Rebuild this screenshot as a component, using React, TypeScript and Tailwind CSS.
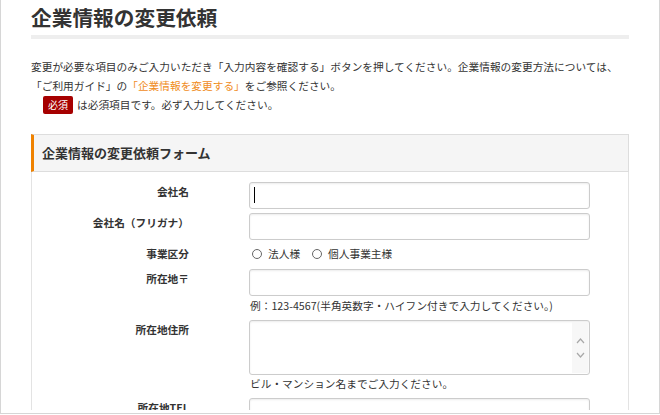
import React from "react";

const font = { fontFamily: '"Noto Sans CJK JP", "Noto Sans", sans-serif' };

function Label({ children }: { children: React.ReactNode }) {
  return (
    <div className="w-[157px] shrink-0 text-right text-[10.7px] font-bold leading-[20px] text-[#333]">
      {children}
    </div>
  );
}

function Field({ caret }: { caret?: boolean }) {
  return (
    <div className="relative h-[27px] w-[341px] rounded-[3px] border border-[#ccc] bg-white shadow-[inset_0_1px_2px_rgba(0,0,0,0.08)]">
      {caret && <span className="absolute left-[4px] top-[4px] h-[16px] w-px bg-black" />}
    </div>
  );
}

function Radio({ label }: { label: string }) {
  return (
    <span className="inline-flex items-center gap-[6px]">
      <span className="h-[10px] w-[10px] rounded-full border border-[#666] bg-white" />
      <span>{label}</span>
    </span>
  );
}

export default function App() {
  return (
    <div className="h-[415px] w-[660px] bg-white" style={font}>
      <div className="h-[414px] w-[660px] border-x border-b border-[#d6d6d6]">
        <div className="h-[410px] overflow-hidden px-[30px] text-[#333]">
          <h1 className="border-b-[4px] border-[#eeeeee] text-[20.7px] font-bold leading-[35px] text-[#333]">
            企業情報の変更依頼
          </h1>

          <div className="mt-[18px] text-[10.7px] leading-[19px]">
            <p>変更が必要な項目のみご入力いただき「入力内容を確認する」ボタンを押してください。企業情報の変更方法については、</p>
            <p>
              「ご利用ガイド」の<span className="text-[#f08c1c]">「企業情報を変更する」</span>をご参照ください。
            </p>
            <p className="flex items-center">
              <span className="ml-[12px] mr-[4px] inline-flex h-[18px] w-[30px] items-center justify-center rounded-[2px] bg-[#a60000] text-[10px] text-white">
                必須
              </span>
              は必須項目です。必ず入力してください。
            </p>
          </div>

          <div className="mt-[20px]">
            <div className="flex h-[38px] items-center border-y border-r border-[#dddddd] border-l-[3px] border-l-[#ef8200] bg-[#f5f5f5] pl-[8px] text-[13px] font-bold text-[#333]">
              企業情報の変更依頼フォーム
            </div>
            <div className="border-x border-[#e3e3e3] pt-[10px] pb-[20px]">
              <div className="flex gap-[60px]">
                <Label>会社名</Label>
                <Field caret />
              </div>
              <div className="mt-[4px] flex gap-[60px]">
                <Label>会社名（フリガナ）</Label>
                <Field />
              </div>
              <div className="mt-[4px] flex gap-[60px]">
                <Label>事業区分</Label>
                <div className="flex items-center gap-[12px] pl-[3px] text-[10.7px] leading-[20px]">
                  <Radio label="法人様" />
                  <Radio label="個人事業主様" />
                </div>
              </div>
              <div className="mt-[5px] flex gap-[60px]">
                <Label>所在地〒</Label>
                <div>
                  <Field />
                  <p className="pl-px text-[10.7px] leading-[20px]">例：123-4567(半角英数字・ハイフン付きで入力してください。)</p>
                </div>
              </div>
              <div className="mt-[4px] flex gap-[60px]">
                <Label>所在地住所</Label>
                <div>
                  <div className="relative h-[55px] w-[341px] rounded-[3px] border border-[#ccc] bg-white shadow-[inset_0_1px_2px_rgba(0,0,0,0.08)]">
                    <div className="absolute right-[1px] top-px bottom-px flex w-[16px] flex-col items-center justify-center gap-[8px] bg-[#f7f7f7]">
                      <svg width="9" height="6" viewBox="0 0 9 6" fill="none" stroke="#a8a8a8" strokeWidth="1.2">
                        <path d="M1 5l3.5-4L8 5" />
                      </svg>
                      <svg width="9" height="6" viewBox="0 0 9 6" fill="none" stroke="#a8a8a8" strokeWidth="1.2">
                        <path d="M1 1l3.5 4L8 1" />
                      </svg>
                    </div>
                  </div>
                  <p className="pl-px text-[10.7px] leading-[18px]">ビル・マンション名までご入力ください。</p>
                </div>
              </div>
              <div className="mt-[5px] flex gap-[60px]">
                <Label>所在地TEL</Label>
                <Field />
              </div>
            </div>
          </div>
        </div>
      </div>
    </div>
  );
}
